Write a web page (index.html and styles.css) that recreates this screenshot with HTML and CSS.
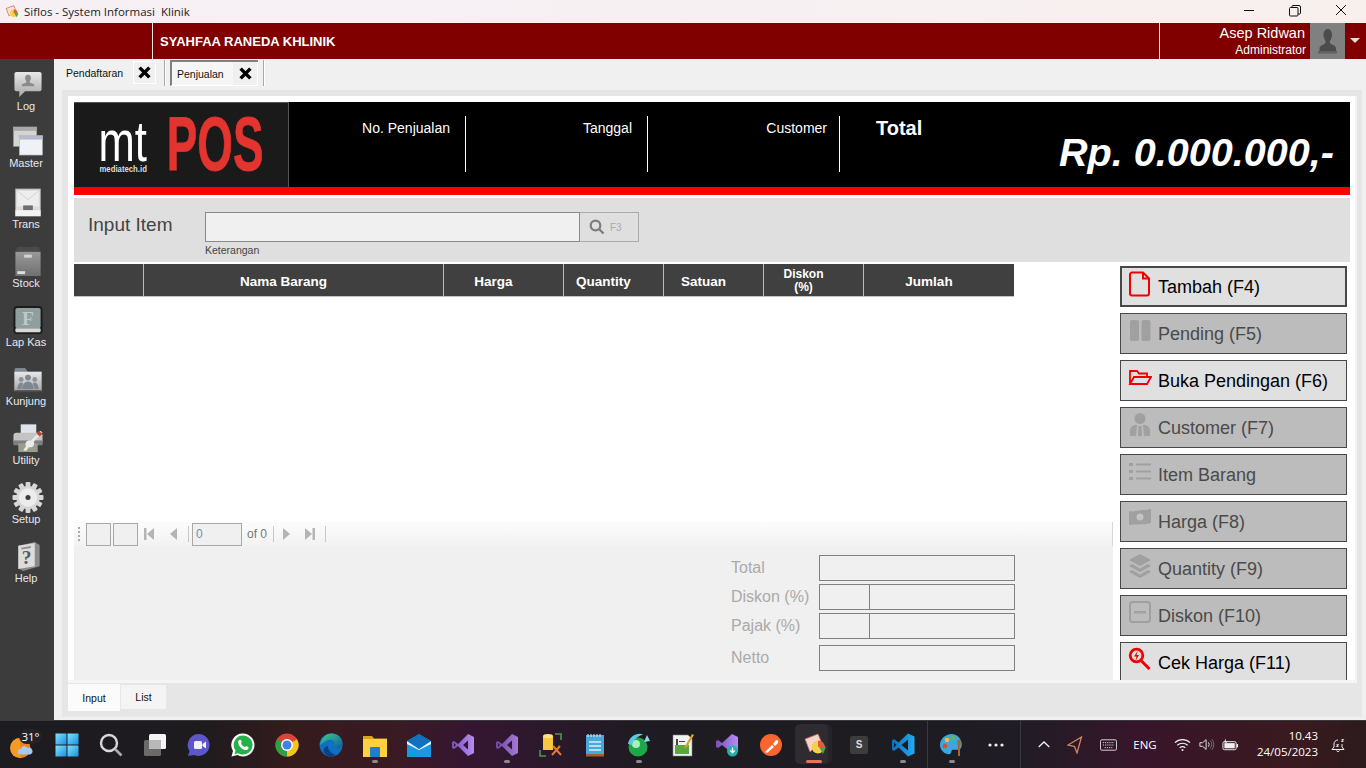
FILE: index.html
```html
<!DOCTYPE html>
<html lang="id">
<head>
<meta charset="utf-8">
<title>Siflos - System Informasi Klinik</title>
<link rel="stylesheet" href="styles.css">
</head>
<body>
<svg class="defs" aria-hidden="true">
  <defs>
    <linearGradient id="gLight" x1="0" y1="0" x2="0" y2="1"><stop offset="0" stop-color="#e8e8e8"/><stop offset="1" stop-color="#a8a8a8"/></linearGradient>
    <linearGradient id="gBox" x1="0" y1="0" x2="0" y2="1"><stop offset="0" stop-color="#9a9a9a"/><stop offset="1" stop-color="#707070"/></linearGradient>
    <linearGradient id="gWin" x1="0" y1="0" x2="1" y2="1"><stop offset="0" stop-color="#7fe3fb"/><stop offset="1" stop-color="#1a8fe0"/></linearGradient>
    <linearGradient id="gVs" x1="0" y1="0" x2="1" y2="0"><stop offset="0" stop-color="#7a4fc0"/><stop offset="1" stop-color="#b78cf0"/></linearGradient>
    <linearGradient id="gCode" x1="0" y1="0" x2="1" y2="0"><stop offset="0" stop-color="#0a6fbc"/><stop offset="1" stop-color="#25a9f0"/></linearGradient>
    <linearGradient id="gEdge" x1="0" y1="0" x2="1" y2="1"><stop offset="0" stop-color="#3ad08a"/><stop offset="1" stop-color="#0c59a4"/></linearGradient>
  </defs>
</svg>
<div class="titlebar">
  <svg class="app-icon" viewBox="0 0 24 24"><path d="M2 6l13-5 3 7-11 11z" fill="#f6e2dc" stroke="#d85c4c" stroke-width="1.200"/><circle cx="15" cy="14" r="6.500" fill="#f5d24a"/><path d="M15 7.500a6.500 6.500 0 0 1 6.500 6.500H15z" fill="#e85a40"/><path d="M16 14h7l-3 7z" fill="#3fa84a"/></svg>
  <span class="app-title">Siflos - System Informasi&nbsp; Klinik</span>
  <div class="win-controls">
    <svg class="win-btn" viewBox="0 0 46 23"><path d="M18 10.500h10" stroke="#111" fill="none"/></svg>
    <svg class="win-btn" viewBox="0 0 46 23"><path d="M18.500 7.500h6.500a1 1 0 0 1 1 1v6.500a1 1 0 0 1-1 1h-6.500a1 1 0 0 1-1-1v-6.500a1 1 0 0 1 1-1zM20 7.500v-1a1 1 0 0 1 1-1h6a1.500 1.500 0 0 1 1.500 1.500v6a1 1 0 0 1-1 1h-1.500" stroke="#111" fill="none"/></svg>
    <svg class="win-btn" viewBox="0 0 46 23"><path d="M18 5l10 10M28 5l-10 10" stroke="#111" fill="none"/></svg>
  </div>
</div>

<header class="brandbar">
  <div class="brand-spacer"></div>
  <div class="brand-name">SYAHFAA RANEDA KHLINIK</div>
  <div class="user-block">
    <div class="user-text">
      <div class="user-name">Asep Ridwan</div>
      <div class="user-role">Administrator</div>
    </div>
    <div class="avatar">
      <svg viewBox="0 0 35 36" class="avatar-svg"><path d="M17.500 6c3 0 4.500 2.500 4.500 5.500 0 3-1 5-2 6.500-.8 1.500 .5 3 3 4 2.300 1 3 2 3 3.500v2.500H9.500V25.500c0-1.500 .7-2.500 3-3.500 2.500-1 3.800-2.500 3-4-1-1.500-2-3.500-2-6.500 0-3 1.500-5.500 4.500-5.500z" fill="#4c4c4c"/><rect x="8" y="28" width="19" height="2.500" fill="#606060"/></svg>
    </div>
    <div class="user-caret"></div>
  </div>
</header>

<div class="workspace">
  <nav class="sidebar">
    <div class="side-item">
      <svg class="side-icon" viewBox="0 0 32 32"><path d="M4 3h24a2 2 0 0 1 2 2v16a2 2 0 0 1-2 2H13l-6 6v-6H4a2 2 0 0 1-2-2V5a2 2 0 0 1 2-2z" fill="url(#gLight)"/><path d="M16 6c2 0 3 1.500 3 3.300 0 1.700-.8 2.700-1.300 3.500-.3.800.3 1.300 2 2 1.500.6 2.800 1 2.800 2v1H9.500v-1c0-1 1.300-1.400 2.800-2 1.700-.7 2.300-1.200 2-2-.5-.8-1.300-1.800-1.300-3.500C13 7.500 14 6 16 6z" fill="#8c8c8c"/></svg>
      <span>Log</span>
    </div>
    <div class="side-item side-item-tight">
      <svg class="side-icon" viewBox="0 0 32 32"><rect x="1" y="1" width="24" height="20" fill="#d4d4d4" stroke="#9a9a9a" stroke-width=".6"/><rect x="1" y="1" width="24" height="4" fill="#a8a8a8"/><rect x="7" y="10" width="24" height="20" fill="#eef1f6" stroke="#a8a8a8" stroke-width=".6"/><rect x="7" y="10" width="24" height="4" fill="#b4bccb"/></svg>
      <span>Master</span>
    </div>
    <div class="side-item">
      <svg class="side-icon" viewBox="0 0 32 32"><rect x="3" y="2" width="26" height="28" fill="#dcdcdc" stroke="#9c9c9c" stroke-width=".8"/><rect x="5" y="4" width="22" height="16" fill="#ededed"/><path d="M5 4l11 9 11-9" fill="none" stroke="#d2d2d2"/><rect x="11" y="19" width="10" height="5" fill="#6e6e6e"/><rect x="3" y="24" width="26" height="6" fill="#f2f2f2"/></svg>
      <span>Trans</span>
    </div>
    <div class="side-item">
      <svg class="side-icon" viewBox="0 0 32 32"><path d="M5 1h22l2 5H3z" fill="#4a4a4a"/><rect x="3" y="6" width="26" height="25" fill="url(#gBox)"/><rect x="12" y="9" width="8" height="3" fill="#d4d4d4"/><rect x="5" y="26" width="8" height="3" fill="#dedede"/></svg>
      <span>Stock</span>
    </div>
    <div class="side-item">
      <svg class="side-icon" viewBox="0 0 32 32"><rect x="1" y="1" width="30" height="29" rx="4" fill="#1c1c1c"/><rect x="3" y="3" width="26" height="21" rx="2" fill="#8f9fa0"/><text x="16" y="21" class="book-f">F</text><rect x="3" y="24" width="26" height="4" rx="1" fill="#d8d8d8"/></svg>
      <span>Lap Kas</span>
    </div>
    <div class="side-item">
      <svg class="side-icon" viewBox="0 0 32 32"><path d="M3 4h10l3 4h14v20H2V6z" fill="#7d8794"/><rect x="2" y="8" width="28" height="20" fill="url(#gLight)"/><circle cx="16" cy="14" r="3" fill="#7f8790"/><circle cx="9" cy="16" r="2.500" fill="#8d949c"/><circle cx="23" cy="16" r="2.500" fill="#8d949c"/><path d="M10 26c0-5 3-8 6-8s6 3 6 8zM5 26c0-4 2-7 4-7l2 1-2 6zM27 26c0-4-2-7-4-7l-2 1 2 6z" fill="#7f8790"/><rect x="2" y="27" width="28" height="2" fill="#4c4c4c"/></svg>
      <span>Kunjung</span>
    </div>
    <div class="side-item">
      <svg class="side-icon" viewBox="0 0 32 32"><rect x="8" y="1" width="17" height="11" fill="#dfe3ea" stroke="#404040" stroke-width=".8"/><rect x="1" y="10" width="30" height="12" rx="3" fill="#c4c4c4"/><rect x="1" y="18" width="30" height="5" fill="#808080"/><rect x="6" y="21" width="20" height="9" fill="#9a9f8c"/><path d="M29 8l2 2-9 9c1.500 3-1 7-5 6l-3 4-3-1 3-4c-2-3 1-7 5-6z" fill="#eaeaea"/><path d="M27 8l4 3-3 3-3-3z" fill="#c0443a"/></svg>
      <span>Utility</span>
    </div>
    <div class="side-item">
      <svg class="side-icon" viewBox="0 0 32 32"><g fill="#d6d6d6"><circle cx="16" cy="16" r="12"/><g><rect x="13.500" y="0" width="5" height="32" rx="1"/><rect x="13.500" y="0" width="5" height="32" rx="1" transform="rotate(30 16 16)"/><rect x="13.500" y="0" width="5" height="32" rx="1" transform="rotate(60 16 16)"/><rect x="13.500" y="0" width="5" height="32" rx="1" transform="rotate(90 16 16)"/><rect x="13.500" y="0" width="5" height="32" rx="1" transform="rotate(120 16 16)"/><rect x="13.500" y="0" width="5" height="32" rx="1" transform="rotate(150 16 16)"/></g></g><circle cx="16" cy="16" r="9.500" fill="#ececec"/><circle cx="16" cy="16" r="2.600" fill="#3c3c3c"/></svg>
      <span>Setup</span>
    </div>
    <div class="side-item">
      <svg class="side-icon" viewBox="0 0 32 32"><path d="M6 5l17-4 5 3v22l-17 5-5-3z" fill="#8a8a8a"/><path d="M6 5l17-3v24L6 29z" fill="#dcdcdc"/><text x="14.500" y="24" class="book-q">?</text><rect x="9" y="6" width="10" height="2" fill="#8e8e8e" transform="rotate(-10 14 7)"/></svg>
      <span>Help</span>
    </div>
  </nav>

  <main class="content">
    <div class="doc-tabs">
      <div class="doc-tab">Pendaftaran</div>
      <div class="doc-close"><svg viewBox="0 0 12 12" class="x-icon"><path d="M1.500 1.500l9 9M10.500 1.500l-9 9"/></svg></div>
      <div class="doc-sep doc-sep-a"></div>
      <div class="doc-tab-active">
        <div class="doc-tab-label">Penjualan</div>
        <div class="doc-close doc-close-active"><svg viewBox="0 0 12 12" class="x-icon"><path d="M1.500 1.500l9 9M10.500 1.500l-9 9"/></svg></div>
      </div>
      <div class="doc-sep doc-sep-b"></div>
    </div>

    <div class="panel">
      <div class="sheet">
        <section class="pos-header">
          <div class="logo">
            <svg viewBox="0 0 215 85" class="logo-svg">
              <text x="24" y="59" class="logo-mt" textLength="49" lengthAdjust="spacingAndGlyphs">mt</text>
              <text x="25" y="70" class="logo-sub" textLength="48" lengthAdjust="spacingAndGlyphs">mediatech.id</text>
              <text x="93" y="68" class="logo-pos" textLength="98" lengthAdjust="spacingAndGlyphs">POS</text>
            </svg>
          </div>
          <div class="hfield hfield-1">No. Penjualan</div>
          <div class="hfield hfield-2">Tanggal</div>
          <div class="hfield hfield-3">Customer</div>
          <div class="htotal">
            <div class="htotal-label">Total</div>
            <div class="htotal-amount">Rp. 0.000.000,-</div>
          </div>
        </section>
        <div class="redline"></div>

        <section class="input-panel">
          <div class="input-title">Input Item</div>
          <div class="input-col">
            <div class="input-row">
              <div class="input-box"></div>
              <div class="input-btn">
                <svg viewBox="0 0 16 16" class="search-icon"><circle cx="6.500" cy="6.500" r="4.800"/><path d="M10 10l4.500 4.500"/></svg>
                <span>F3</span>
              </div>
            </div>
            <div class="input-hint">Keterangan</div>
          </div>
        </section>

        <section class="work">
          <div class="work-left">
            <div class="grid-head">
              <div class="gh gh-a"></div>
              <div class="gh gh-b">Nama Barang</div>
              <div class="gh gh-c">Harga</div>
              <div class="gh gh-d">Quantity</div>
              <div class="gh gh-d">Satuan</div>
              <div class="gh gh-d gh-small">Diskon<br>(%)</div>
              <div class="gh gh-e">Jumlah</div>
            </div>
            <div class="grid-body"></div>
            <div class="pager">
              <div class="grip"></div>
              <div class="pager-box"></div>
              <div class="pager-box"></div>
              <svg viewBox="0 0 10 12" class="pg-first"><rect x="0" y="0" width="2.500" height="12"/><path d="M10 0v12L3 6z"/></svg>
              <svg viewBox="0 0 7 12" class="pg-prev"><path d="M7 0v12L0 6z"/></svg>
              <div class="pg-sep pg-sep-a"></div>
              <div class="pg-input">0</div>
              <div class="pg-of">of 0</div>
              <div class="pg-sep pg-sep-b"></div>
              <svg viewBox="0 0 7 12" class="pg-next"><path d="M0 0v12l7-6z"/></svg>
              <svg viewBox="0 0 10 12" class="pg-last"><path d="M0 0v12l7-6z"/><rect x="7.500" y="0" width="2.500" height="12"/></svg>
              <div class="pg-sep pg-sep-c"></div>
              <div class="pg-end"></div>
            </div>
            <div class="summary">
              <div class="sum-row"><div class="sum-label">Total</div><div class="sum-box"></div></div>
              <div class="sum-row"><div class="sum-label">Diskon (%)</div><div class="sum-box sum-split"><div class="sum-cell"></div></div></div>
              <div class="sum-row"><div class="sum-label">Pajak (%)</div><div class="sum-box sum-split"><div class="sum-cell"></div></div></div>
              <div class="sum-row sum-row-net"><div class="sum-label">Netto</div><div class="sum-box"></div></div>
            </div>
          </div>
          <div class="work-right">
            <div class="act act-on act-focus">
              <svg class="act-icon" viewBox="0 0 24 26"><path d="M4 1.500h11l6 6v15a2 2 0 0 1-2 2H4a2 2 0 0 1-2-2v-19a2 2 0 0 1 2-2zM15 1.500v6h6" fill="none" stroke="#f00000" stroke-width="2"/></svg>
              <span>Tambah (F4)</span>
            </div>
            <div class="act">
              <svg class="act-icon" viewBox="0 0 24 26"><rect x="2" y="2" width="9" height="21" rx="2" fill="#a0a0a0"/><rect x="13.500" y="2" width="9" height="21" rx="2" fill="#a0a0a0"/></svg>
              <span>Pending (F5)</span>
            </div>
            <div class="act act-on">
              <svg class="act-icon" viewBox="0 0 24 26"><path d="M2 19V6h7l2 2.500h8V12M2 19l4-7h17l-4 7z" fill="none" stroke="#f00000" stroke-width="1.800"/></svg>
              <span>Buka Pendingan (F6)</span>
            </div>
            <div class="act">
              <svg class="act-icon" viewBox="0 0 24 26"><circle cx="12" cy="6.500" r="5.500" fill="#a0a0a0"/><path d="M2 24v-6c0-3 3-5 7-5l-1 11zM22 24v-6c0-3-3-5-7-5l1 11zM10.500 14h3l.5 10h-4z" fill="#a0a0a0"/></svg>
              <span>Customer (F7)</span>
            </div>
            <div class="act">
              <svg class="act-icon" viewBox="0 0 24 26"><g fill="#a0a0a0"><rect x="1" y="4" width="4" height="3"/><rect x="1" y="11" width="4" height="3"/><rect x="1" y="18" width="4" height="3"/><rect x="8" y="4.500" width="15" height="2"/><rect x="8" y="11.500" width="15" height="2"/><rect x="8" y="18.500" width="15" height="2"/></g></svg>
              <span>Item Barang</span>
            </div>
            <div class="act">
              <svg class="act-icon" viewBox="0 0 24 26"><path d="M1 5c4 1.500 9-1 14-1 3 0 6-.5 8-1v14c-4 1.500-9 1-14 1.500-3 0-5 .5-8 .5z" fill="#a0a0a0"/><circle cx="12" cy="11" r="3.500" fill="#c4c4c4"/></svg>
              <span>Harga (F8)</span>
            </div>
            <div class="act">
              <svg class="act-icon" viewBox="0 0 24 26"><g fill="#a0a0a0"><path d="M12 1l11 6-11 6L1 7z"/><path d="M4 11l8 4.500 8-4.500 3 2-11 6-11-6z"/><path d="M4 17l8 4.500 8-4.500 3 2-11 6-11-6z"/></g></svg>
              <span>Quantity (F9)</span>
            </div>
            <div class="act">
              <svg class="act-icon" viewBox="0 0 24 26"><rect x="2" y="2" width="20" height="20" rx="2.500" fill="none" stroke="#a0a0a0" stroke-width="2"/><rect x="6" y="11" width="12" height="2.500" fill="#a0a0a0"/></svg>
              <span>Diskon (F10)</span>
            </div>
            <div class="act act-on">
              <svg class="act-icon" viewBox="0 0 24 26"><circle cx="8.500" cy="8.500" r="6.300" fill="none" stroke="#f00000" stroke-width="2.800"/><path d="M13.500 14l8 8" stroke="#f00000" stroke-width="3"/><path d="M10 3.500L6 9.500h2.500l-1 4.500 3.500-6H8.500z" fill="#f00000"/></svg>
              <span>Cek Harga (F11)</span>
            </div>
          </div>
        </section>
      </div>
      <div class="sheet-edge"></div>
      <div class="page-tabs">
        <div class="page-tab page-tab-on">Input</div>
        <div class="page-tab">List</div>
      </div>
    </div>
  </main>
</div>

<footer class="taskbar">
  <div class="tb tb-weather">
    <svg viewBox="0 0 26 26" class="ico24"><circle cx="11" cy="13" r="11" fill="#f59a23"/><path d="M11 2a11 11 0 0 1 0 22z" fill="#e8741a" opacity=".6"/><path d="M11 20a3 3 0 0 1 .5-6 4 4 0 0 1 7.500-1 3.500 3.500 0 0 1 3 7z" fill="#a8c8ec"/></svg>
    <span class="temp">31°</span>
  </div>
  <div class="tb"><svg viewBox="0 0 24 24" class="ico24"><rect x="0.500" y="0.500" width="11" height="11" fill="url(#gWin)"/><rect x="12.500" y="0.500" width="11" height="11" fill="url(#gWin)"/><rect x="0.500" y="12.500" width="11" height="11" fill="url(#gWin)"/><rect x="12.500" y="12.500" width="11" height="11" fill="url(#gWin)"/></svg></div>
  <div class="tb"><svg viewBox="0 0 24 24" class="ico24"><circle cx="10" cy="10" r="8" fill="none" stroke="#d8d8d8" stroke-width="2.400"/><path d="M16 16l6.500 6.500" stroke="#aaa" stroke-width="2.600"/></svg></div>
  <div class="tb"><svg viewBox="0 0 24 24" class="ico24"><rect x="6" y="1" width="17" height="15" rx="1.500" fill="#f4f4f4"/><rect x="1" y="7" width="17" height="16" rx="1.500" fill="#6a6a6a"/><rect x="6" y="7" width="12" height="9" fill="#b8b8b8"/></svg></div>
  <div class="tb"><svg viewBox="0 0 24 24" class="ico24"><path d="M12 1a11 11 0 1 1-5 21L1 23l1.500-5A11 11 0 0 1 12 1z" fill="#5b56c9"/><rect x="7" y="8" width="8" height="8" rx="1.500" fill="#f2f2f2"/><path d="M15.500 11l3.500-2.500v7L15.500 13z" fill="#f2f2f2"/></svg></div>
  <div class="tb"><svg viewBox="0 0 24 24" class="ico24"><path d="M12 .5a11.500 11.500 0 1 1-5.500 21.600L.5 23.500 2 18A11.500 11.500 0 0 1 12 .5z" fill="#fff"/><path d="M12 2.500a9.500 9.500 0 1 1-4.800 17.700l-3.700 1 1-3.600A9.500 9.500 0 0 1 12 2.500z" fill="#25b04a"/><path d="M8.700 6.800c1-.6 1.500 .5 2 1.700.3 .8-.8 1.400-.6 2 .6 1.500 2 2.800 3.500 3.400.7 .2 1.200-1 2-.7 1 .4 2.200 1 2 1.800-.4 1.700-2.200 2.400-3.800 1.900-3.400-1-6-3.700-6.700-7-.2-1.200 .6-2.500 1.600-3.100z" fill="#fff"/></svg></div>
  <div class="tb"><svg viewBox="0 0 24 24" class="ico24"><circle cx="12" cy="12" r="11.500" fill="#dc4437"/><path d="M12 12L22 6.200A11.500 11.500 0 0 1 12 23.500z" fill="#f5c518"/><path d="M12 12v11.500A11.500 11.500 0 0 1 2 6.200z" fill="#2f9e44"/><circle cx="12" cy="12" r="6" fill="#fff"/><circle cx="12" cy="12" r="4.500" fill="#3f80ea"/></svg></div>
  <div class="tb"><svg viewBox="0 0 24 24" class="ico24"><circle cx="12" cy="12" r="11.500" fill="#0f6fc0"/><path d="M1 12C2 5 7 .5 13 .5c6 0 10.500 4.500 10.500 10 0 3-2 5-5 5-2 0-4-1-4-2.500 1-1 1.500-2 1-3.500C14.500 7 11 6 8 7.500 4 9.500 2.500 11 1 12z" fill="url(#gEdge)"/><path d="M9 13c0 4 3 8 8 8.500-5 3.500-10 1.500-12-2-1-2 0-6 4-6.500z" fill="#0a3f8a"/></svg></div>
  <div class="tb tb-run"><svg viewBox="0 0 24 24" class="ico24"><path d="M0 3h9l2 2.500h13V10H0z" fill="#d9a520"/><rect x="0" y="6" width="24" height="18" fill="#ffd13f"/><rect x="7" y="14" width="10" height="10" rx="1" fill="#1f7ed0"/></svg></div>
  <div class="tb"><svg viewBox="0 0 24 24" class="ico24"><path d="M0 8l12-7 12 7v16H0z" fill="#1b98e0"/><path d="M0 8l12 8 12-8v3l-12 6-12-6z" fill="#fff" opacity=".92"/><path d="M12 1L0 8l12 8 12-8z" fill="#0c63b0" opacity=".7"/></svg></div>
  <div class="tb"><svg viewBox="0 0 24 24" class="ico24"><path d="M17 1l6 3v16l-6 3L7 13l-4 3-2-1V9l2-1 4 3zM17 7.500L12 12l5 4.500zM3 10v4l2-2z" fill="url(#gVs)"/></svg></div>
  <div class="tb tb-run"><svg viewBox="0 0 24 24" class="ico24"><path d="M17 1l6 3v16l-6 3L7 13l-4 3-2-1V9l2-1 4 3zM17 7.500L12 12l5 4.500zM3 10v4l2-2z" fill="url(#gVs)" opacity=".85"/></svg></div>
  <div class="tb"><svg viewBox="0 0 24 24" class="ico24"><path d="M4 3h10v14H4z" fill="#f4c93f"/><ellipse cx="9" cy="3" rx="5" ry="2" fill="#ffe27a"/><path d="M16 1h6v6M1 17v6h6" fill="none" stroke="#4a9a4a" stroke-width="1.600"/><path d="M13 22l8-9M14 13l8 9" stroke="#e8772a" stroke-width="2"/></svg></div>
  <div class="tb"><svg viewBox="0 0 24 24" class="ico24"><rect x="3" y="2" width="18" height="21" fill="#4aa8d8"/><rect x="3" y="21" width="18" height="2.500" fill="#a06030"/><path d="M6 9h12M6 13h12M6 17h12" stroke="#d8f0fa" stroke-width="1.600"/><path d="M5 1v3M8 1v3M11 1v3M14 1v3M17 1v3" stroke="#cfe" stroke-width="1"/></svg></div>
  <div class="tb tb-run"><svg viewBox="0 0 24 24" class="ico24"><circle cx="11" cy="14" r="9.500" fill="#1fa84a"/><circle cx="9" cy="11" r="4" fill="#a7f0b8"/><path d="M1 11C2 3 11-1 16 1.500 11 3 7 6 5 12z" fill="#5cc8e8"/><path d="M17 9l3-7 3 6z" fill="#8ad8f0"/></svg></div>
  <div class="tb"><svg viewBox="0 0 24 24" class="ico24"><path d="M2 2h15l4 4v17H2z" fill="#f2f2f2" stroke="#888" stroke-width=".6"/><rect x="4" y="12" width="14" height="9" fill="#5aa83c"/><path d="M5 6h2v6H5zM8 8h6v1H8z" fill="#444"/><path d="M14 13l7-12 2 1-7 12-3 1z" fill="#e0a030"/></svg></div>
  <div class="tb"><svg viewBox="0 0 24 24" class="ico24"><path d="M17 1l6 3v14l-6 2L7 12l-4 3-2-1V8l2-1 4 3z" fill="url(#gVs)"/><circle cx="17.500" cy="18" r="5.500" fill="#20b2aa"/><path d="M17.500 14.500v5M15.300 17.500l2.200 2.300 2.200-2.300" fill="none" stroke="#fff" stroke-width="1.300"/></svg></div>
  <div class="tb"><svg viewBox="0 0 24 24" class="ico24"><circle cx="12" cy="12" r="11" fill="#f8652e"/><path d="M6 19l7-7 2 2-7 6zM14 11l3-4a2 2 0 0 1 2 3l-3 3z" fill="#fff"/></svg></div>
  <div class="tb tb-active">
    <div class="tb-active-back"></div>
    <svg viewBox="0 0 24 24" class="ico24"><path d="M2 6l13-5 3 7-11 11z" fill="#f1d4cc" stroke="#d85c4c" stroke-width=".8"/><circle cx="15" cy="14" r="6.500" fill="#f5d24a"/><path d="M15 7.500a6.500 6.500 0 0 1 6.500 6.500H15z" fill="#e85a40"/><path d="M16 14h7l-3 7z" fill="#3fa84a"/></svg>
  </div>
  <div class="tb"><div class="s-icon">S</div></div>
  <div class="tb tb-run"><svg viewBox="0 0 24 24" class="ico24"><path d="M17 .5l6.500 3v17l-6.500 3L7.500 14.500 3 18l-2-1.200V7.200L3 6l4.500 3.500zM17 6.500L10.500 12 17 17.500zM3 9.500v5L5.500 12z" fill="url(#gCode)"/></svg></div>
  <div class="tb-divider"></div>
  <div class="tb tb-run tb-palette"><svg viewBox="0 0 24 24" class="ico24"><path d="M12 1C5 1 0 6 0 12c0 6 6 10 10 9 2-1 1-3 2-4 2-1 7 1 9-2 3-5-2-14-9-14z" fill="#3ba7dc"/><circle cx="5" cy="13" r="2.300" fill="#e8452c"/><circle cx="7" cy="7" r="2.300" fill="#f5b82e"/><circle cx="13" cy="5" r="2.300" fill="#5cb85c"/><path d="M17 7h4l-1 9v7h-2v-7z" fill="#a06a30"/></svg></div>
  <div class="tb tb-dots"><svg viewBox="0 0 16 4" class="dots"><circle cx="2" cy="2" r="1.600"/><circle cx="8" cy="2" r="1.600"/><circle cx="14" cy="2" r="1.600"/></svg></div>
  <div class="tb-divider tb-divider-b"></div>
  <div class="tray">
    <svg viewBox="0 0 12 7" class="tray-chev"><path d="M.7 6L6 1l5.300 5"/></svg>
    <svg viewBox="0 0 16 18" class="tray-loc"><path d="M14.500 1L1 9l6.500 1.500L10 17z"/></svg>
    <svg viewBox="0 0 18 12" class="tray-kb"><rect x=".5" y=".5" width="17" height="11" rx="1.500"/><path class="kb-keys" d="M3 3.500h12M3 6h12M5 8.800h8"/></svg>
    <span class="tray-lang">ENG</span>
    <svg viewBox="0 0 18 14" class="tray-wifi"><path d="M1 4.500a11.500 11.500 0 0 1 16 0M3.500 7.300a8 8 0 0 1 11 0M6 10a4.500 4.500 0 0 1 6 0"/><circle cx="9" cy="12.300" r="1.100"/></svg>
    <svg viewBox="0 0 18 14" class="tray-vol"><path d="M1 5h3l4-3.500v11L4 9H1zM10.500 4.500a4 4 0 0 1 0 5"/><path class="vol-dim" d="M12.500 2.500a7 7 0 0 1 0 9M14.500 1a9.500 9.500 0 0 1 0 12"/></svg>
    <svg viewBox="0 0 18 14" class="tray-bat"><rect x="1" y="3.500" width="14" height="8.500" rx="1.500"/><rect x="2.500" y="5" width="11" height="5.500" class="bat-fill"/><rect x="15.500" y="6" width="1.500" height="3.500" class="bat-fill"/><path class="bat-fill" d="M4 0L2 4h2L3 7l3-4H4z"/></svg>
    <div class="clock"><div>10.43</div><div>24/05/2023</div></div>
    <svg viewBox="0 0 16 16" class="tray-bell"><path d="M8 3C5.500 3 4 5 4 7v3l-2 2.500h12L12 10V7"/><path d="M6.500 13.500a1.600 1.600 0 0 0 3 0"/><text x="6" y="10" class="bell-z">z</text><text x="11" y="5" class="bell-z">z</text></svg>
  </div>
</footer>
</body>
</html>
```

FILE: styles.css
```css
* { box-sizing: border-box; }
html, body { margin: 0; padding: 0; }
body {
  width: 1366px; height: 768px; overflow: hidden;
  display: flex; flex-direction: column;
  font-family: "Liberation Sans", Arial, sans-serif;
  background: #f0f0f0;
}
.defs { width: 0; height: 0; display: block; flex: none; }

/* title bar */
.titlebar {
  height: 23px; flex: none; display: flex; align-items: center;
  padding-left: 5px;
  background: linear-gradient(90deg, #f6eff4 0%, #f7f0f3 50%, #f8f0ed 100%);
}
.app-icon { width: 14px; height: 14px; margin-right: 5px; }
.app-title { font-family: "Open Sans", sans-serif; font-size: 11.5px; color: #222; }
.win-controls { margin-left: auto; display: flex; margin-right: 2px; }
.win-btn { width: 46px; height: 23px; display: block; }

/* brand bar */
.brandbar { height: 36px; flex: none; display: flex; background: #800000; color: #fff; }
.brand-spacer { width: 153px; border-right: 1px solid #f6e6e6; flex: none; }
.brand-name { padding-left: 7px; font-weight: 700; font-size: 13px; line-height: 38px; }
.user-block { margin-left: auto; width: 207px; border-left: 1px solid #f6e6e6; display: flex; }
.user-text { flex: 1; text-align: right; padding-right: 4px; }
.user-name { font-size: 14.500px; line-height: 16px; margin-top: 2px; padding-right: 1px; }
.user-role { font-size: 12px; line-height: 14px; margin-top: 2px; }
.avatar { width: 35px; background: #808080; flex: none; }
.avatar-svg { width: 35px; height: 36px; display: block; }
.user-caret { width: 21px; position: relative; flex: none; }
.user-caret::after {
  content: ""; position: absolute; left: 5px; top: 15px;
  border-left: 5px solid transparent; border-right: 5px solid transparent;
  border-top: 5px solid #e8dede;
}

/* workspace */
.workspace { flex: none; height: 661px; display: flex; }
.sidebar {
  width: 54px; flex: none; background: #3c3c3c;
  padding-top: 11px; display: flex; flex-direction: column; align-items: center;
}
.side-item {
  height: 59px; width: 54px; flex: none;
  display: flex; flex-direction: column; align-items: center;
  color: #e8e8f0; font-size: 11px; line-height: 14px;
}
.side-item-tight { height: 61px; margin-top: -2px; padding-top: 0; }
.side-icon { width: 32px; height: 31px; display: block; flex: none; margin: -1px 0 -1px 2px; }
.side-item span { display: block; white-space: nowrap; margin-right: 2px; }
.book-f { font-family: "Liberation Serif", serif; font-size: 20px; font-weight: 700; fill: #c0c8c8; text-anchor: middle; }
.book-q { font-family: "Liberation Serif", serif; font-size: 20px; font-weight: 700; fill: #5a5a5a; text-anchor: middle; }

/* content */
.content { flex: 1; min-width: 0; background: #f0f0f0; padding-left: 8px; display: flex; flex-direction: column; }
.doc-tabs { height: 31px; flex: none; display: flex; align-items: flex-start; padding-left: 4px; font-size: 10.500px; color: #111; }
.doc-tab { width: 67px; line-height: 28px; }
.doc-close {
  width: 23px; height: 23px; margin-top: 2px; border: 1px solid #fff;
  display: flex; align-items: center; justify-content: center;
}
.x-icon { width: 13px; height: 13px; fill: none; stroke: #000; stroke-width: 3.200; display: block; }
.doc-sep { width: 2px; height: 26px; margin-top: 1px; border-left: 1px solid #a8a8a8; border-right: 1px solid #fff; }
.doc-sep-a { margin-left: 8px; }
.doc-sep-b { margin-left: 5px; }
.doc-tab-active {
  width: 88px; height: 26px; margin-left: 4px; margin-top: 1px;
  border-top: 2px solid #808080; border-left: 2px solid #808080; border-bottom: 1px solid #fff;
  display: flex; background: #f6f6f6;
}
.doc-tab-label { flex: 1; padding-left: 5px; line-height: 25px; }
.doc-close-active { width: 25px; height: 23px; margin-top: 0; border: none; background: #f0f0f0; border-right: 1px solid #fff; }

.panel { flex: none; width: 1300px; height: 627px; background: #e6e6e6; padding: 6px 0 0 6px; display: flex; flex-direction: column; }
.sheet { width: 1289px; height: 584px; background: #fff; padding: 6px 0 0 6px; border-right: 2px solid #f4f4f4; flex: none; }
.sheet-edge { height: 3px; width: 1289px; background: #f5f5f5; flex: none; }

/* header */
.pos-header { width: 1276px; height: 85px; background: #000; display: flex; color: #fff; }
.logo { width: 215px; flex: none; background: #1a1a1a; border: 1px solid #555; border-left: none; border-bottom: none; }
.logo-svg { width: 214px; height: 84px; display: block; overflow: visible; }
.logo-mt { font-family: "Liberation Sans", sans-serif; font-size: 58px; fill: #fff; }
.logo-sub { font-family: "Liberation Sans", sans-serif; font-size: 9px; font-weight: 700; fill: #ddd; }
.logo-pos { font-family: "Liberation Sans", sans-serif; font-size: 76px; font-weight: 700; fill: #e3342f; stroke: #e3342f; stroke-width: .8px; }
.hfield {
  height: 56px; margin-top: 14px; border-right: 1px solid #fff;
  text-align: right; font-size: 14px; line-height: 16px; padding: 4px 15px 0 0; flex: none;
}
.hfield-1 { width: 177px; }
.hfield-2 { width: 182px; }
.hfield-3 { width: 192px; padding-right: 12px; }
.htotal { flex: 1; display: flex; flex-direction: column; padding: 14px 16px 0 36px; }
.htotal-label { font-weight: 700; font-size: 20px; line-height: 24px; }
.htotal-amount { align-self: flex-end; font-weight: 700; font-style: italic; font-size: 39.600px; line-height: 44px; margin-top: -10px; }
.redline { width: 1276px; height: 8px; background: #f00; }

/* input panel */
.input-panel { width: 1276px; height: 64px; margin-top: 3px; background: #dfdfdf; display: flex; padding: 14px 0 0 14px; }
.input-title { width: 117px; flex: none; font-size: 19px; line-height: 26px; color: #444; }
.input-row { display: flex; height: 30px; }
.input-box { width: 375px; background: #f0f0f0; border: 1px solid #8a8a8a; border-width: 1.500px 1px 1px 1px; }
.input-btn { width: 59px; border: 1px solid #ababab; border-left: none; display: flex; align-items: center; padding-left: 9px; gap: 5px; color: #aaa; font-size: 10px; }
.search-icon { width: 16px; height: 16px; fill: none; stroke: #7c7c7c; stroke-width: 2.200; }
.input-hint { font-size: 10.500px; line-height: 12px; margin-top: 2px; color: #444; }

/* work */
.work { display: flex; margin-top: 2px; height: 416px; width: 1281px; overflow: hidden; }
.work-left { width: 1039px; flex: none; display: flex; flex-direction: column; }
.grid-head { width: 940px; height: 33px; display: flex; background: #404040; border-bottom: 1px solid #c4c4c4; flex: none; color: #fff; font-weight: 700; font-size: 13.500px; }
.gh { border-right: 1px solid #bcbcbc; display: flex; align-items: center; justify-content: center; text-align: center; line-height: 13px; padding: 3px 20px 0 0; }
.gh-a { width: 70px; }
.gh-b { width: 300px; }
.gh-c { width: 120px; }
.gh-d { width: 100px; }
.gh-e { width: 150px; border-right: none; }
.gh-small { font-size: 12px; padding-top: 2px; }
.grid-body { height: 225px; flex: none; background: #fff; }

.pager { height: 24px; flex: none; display: flex; align-items: center; padding-left: 4px; background: linear-gradient(180deg, #fcfcfc, #f2f2f2); color: #777; font-size: 12px; }
.grip { width: 2px; height: 14px; margin-right: 6px; background: repeating-linear-gradient(180deg, #aaa 0 2px, transparent 2px 4px); }
.pager-box { width: 25px; height: 23px; border: 1px solid #a8a8a8; background: #f0f0f0; margin-right: 2px; }
.pager svg { fill: #b4b4b4; display: block; flex: none; height: 12px; }
.pg-first { width: 10px; margin-left: 4px; }
.pg-prev { width: 7px; margin-left: 16px; }
.pg-sep { width: 1px; height: 16px; background: #c8c8c8; flex: none; }
.pg-sep-a { margin-left: 11px; }
.pg-input { width: 50px; height: 23px; margin-left: 3px; border: 1px solid #a8a8a8; background: #f0f0f0; line-height: 21px; padding-left: 3px; color: #6f8fb0; }
.pg-of { margin-left: 5px; width: 20px; white-space: nowrap; }
.pg-sep-b { margin-left: 6px; }
.pg-next { width: 7px; margin-left: 9px; }
.pg-last { width: 10px; margin-left: 15px; }
.pg-sep-c { margin-left: 10px; }
.pg-end { margin-left: auto; width: 1px; height: 24px; background: #d8d8d8; }

.summary { height: 134px; flex: none; background: #f0f0f0; padding: 9px 0 0 657px; }
.sum-row { display: flex; align-items: center; height: 26px; margin-bottom: 3px; }
.sum-row-net { margin-top: 6px; }
.sum-label { width: 88px; flex: none; font-size: 16px; color: #aaaaaa; }
.sum-box { width: 196px; height: 26px; border: 1.500px solid #808080; background: #f0f0f0; display: flex; }
.sum-cell { width: 50px; height: 100%; border-right: 1px solid #808080; }

/* action buttons */
.work-right { padding: 2px 0 0 7px; flex: 1; display: flex; flex-direction: column; gap: 6px; }
.act {
  width: 227px; height: 41px; flex: none; border: 1px solid #484848; background: #bcbcbc;
  display: flex; align-items: center; padding-left: 7px; font-size: 18px; color: #4a4a4a; line-height: 20px;
}
.act span { padding-top: 1px; white-space: nowrap; }
.act-on { background: #e0e0e0; color: #000; }
.act-focus { border: 2px solid #484848; padding-left: 6px; }
.act-icon { width: 24px; height: 26px; margin-right: 6px; margin-bottom: 6px; flex: none; display: block; }

/* bottom tabs */
.page-tabs { display: flex; height: 33px; flex: none; font-size: 10.500px; color: #111; }
.page-tab { width: 45px; height: 24px; margin-top: 2px; line-height: 24px; text-align: center; background: #f4f4f4; margin-left: 1px; }
.page-tab-on { width: 52px; height: 27px; margin-top: 1px; margin-left: 0; line-height: 28px; background: #fbfbfb; }

/* taskbar */
.taskbar {
  height: 48px; flex: none; display: flex; align-items: center; color: #fff; padding-left: 0;
  border-top: 1px solid #3a3a3e;
  background: linear-gradient(90deg, #1d1c21 0, #1e1b1f 200px, #341b1c 290px, #3a1a24 400px, #351632 470px, #1f1b22 640px, #1d1c21 900px, #201c26 1020px, #38152a 1140px, #3a1a1f 1300px, #2c1a1c 1366px);
}
.tb { width: 44px; height: 47px; flex: none; display: flex; align-items: center; justify-content: center; position: relative; }
.ico24 { width: 24px; height: 24px; display: block; position: relative; }
.tb-run::after { content: ""; position: absolute; left: 19px; top: 39px; width: 6px; height: 3px; border-radius: 2px; background: #8c8a8c; }
.tb-weather { width: 45px; }
.tb-weather .ico24 { margin: 6px 0 0 -1px; }
.temp { position: absolute; left: 19px; top: 8px; width: 23px; height: 15px; border-radius: 8px; background: #232226; font-family: "Open Sans", sans-serif; font-size: 11.500px; line-height: 15px; text-align: center; }
.tb-active::before { content: ""; position: absolute; left: 2px; top: 3px; width: 33px; height: 40px; border-radius: 5px; background: #2e2c30; z-index: 1; }
.tb-active-back { position: absolute; left: 4px; top: 3px; width: 35px; height: 40px; border-radius: 5px; background: #262428; }
.tb-active .ico24 { z-index: 2; }
.tb-active::after { content: ""; position: absolute; left: 13px; top: 39px; width: 16px; height: 3px; border-radius: 2px; background: #f07060; z-index: 2; }
.s-icon { width: 18px; height: 18px; background: #3c3c3c; border-radius: 2px; color: #ddd; font-size: 10px; font-weight: 700; line-height: 18px; text-align: center; }
.tb-divider { width: 1px; height: 47px; background: #3c3a40; flex: none; margin-left: 2px; }
.tb-palette { margin-left: 2px; }
.tb-dots { margin-left: 0; }
.dots { width: 16px; height: 4px; fill: #f0f0f0; }
.tb-divider-b { margin-left: 2px; }
.tray { display: flex; align-items: center; flex: 1; height: 47px; position: relative; }
.tray svg { display: block; flex: none; fill: none; stroke: #f0f0f0; }
.tray-chev { width: 12px; height: 7px; margin-left: 17px; stroke-width: 1.300; }
.tray svg.tray-loc { width: 16px; height: 18px; margin-left: 17px; stroke: #e08a60; stroke-width: 1.200; }
.tray-kb { width: 17px; height: 12px; margin-left: 17px; stroke-width: .9; }
.tray svg .kb-keys { stroke-dasharray: 1.300 1; }
.tray-lang { font-family: "Open Sans", sans-serif; font-size: 11.500px; margin-left: 13px; width: 30px; text-align: center; }
.tray-wifi { width: 17px; height: 14px; margin-left: 14px; stroke-width: 1.200; }
.tray-wifi circle { fill: #f0f0f0; stroke: none; }
.tray-vol { width: 16px; height: 13px; margin-left: 8px; stroke-width: 1; }
.vol-dim { stroke: #777; }
.tray svg .vol-dim { stroke: #777; }
.tray-bat { width: 17px; height: 14px; margin-left: 7px; stroke-width: 1; }
.tray svg .bat-fill { fill: #f0f0f0; stroke: none; }
.clock { width: 76px; margin-left: 3px; text-align: right; font-family: "Open Sans", sans-serif; font-size: 11.500px; line-height: 16px; margin-top: -1px; }
.tray-bell { width: 16px; height: 16px; margin-left: 12px; stroke-width: 1; }
.tray svg .bell-z { font-family: "Open Sans", sans-serif; font-size: 6px; font-weight: 700; fill: #f0f0f0; stroke: none; }
```
